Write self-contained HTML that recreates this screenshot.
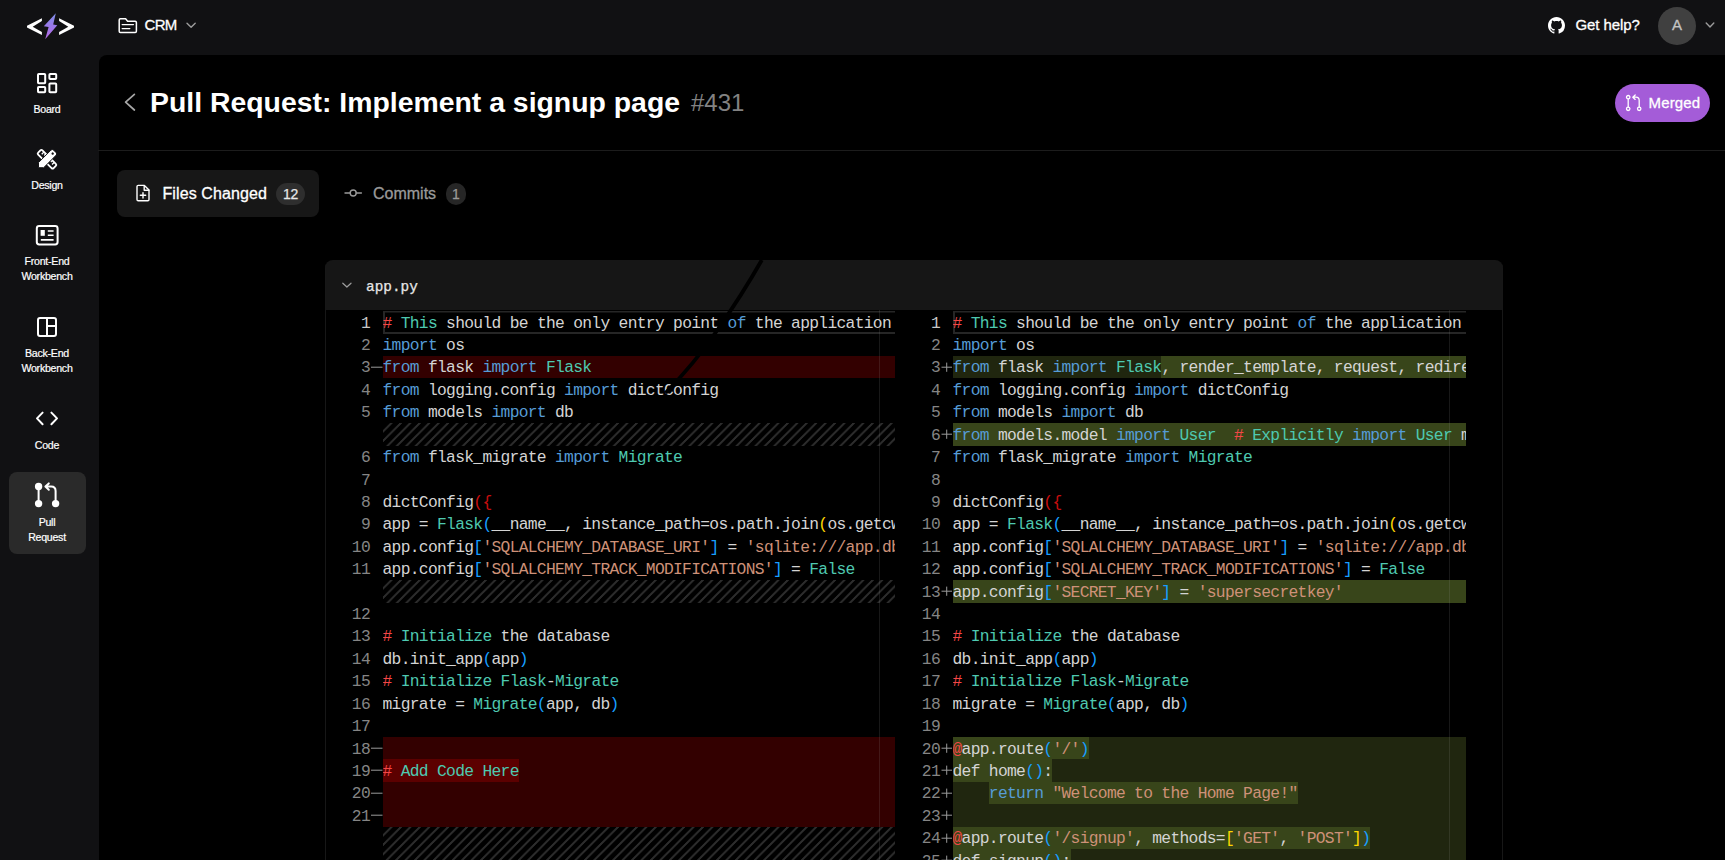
<!DOCTYPE html>
<html lang="en"><head><meta charset="utf-8"><title>Pull Request: Implement a signup page #431</title>
<style>
*{box-sizing:border-box;margin:0;padding:0}
html,body{width:1725px;height:860px;overflow:hidden;background:#111113;}
body{position:relative;font-family:"Liberation Sans",sans-serif;color:#fff;-webkit-font-smoothing:antialiased}
.abs{position:absolute}
.sb{-webkit-text-stroke:.3px currentColor}
#main{position:absolute;left:98.5px;top:55.3px;width:1627px;height:805px;background:#000;border-top-left-radius:8px}
#side .it{position:absolute;left:8.5px;width:77px;text-align:center;font-size:10.6px;line-height:15px;color:#fff;border-radius:8px;letter-spacing:-.25px;-webkit-text-stroke:.2px #fff}
#side .it svg{display:block;margin:12px auto 7px;width:24px;height:24px}
#side .it.act{background:#2a2a2a}
.hdr{position:absolute;font-size:15px;color:#fff;white-space:nowrap}
#title{position:absolute;left:150px;top:83px;font-size:28.4px;font-weight:bold;line-height:38px;white-space:nowrap}
#num{position:absolute;left:691px;top:84px;font-size:24px;line-height:38px;color:#828282;white-space:nowrap}
#sep{position:absolute;left:98px;top:150px;width:1627px;height:1px;background:#1c1c1c}
#merged{position:absolute;left:1615px;top:84px;width:95.3px;height:38px;border-radius:19px;background:#a45cd8;font-size:15px;line-height:38px;color:#fff}
#tab1{position:absolute;left:117px;top:170px;width:202px;height:47px;border-radius:8px;background:#171717}
.tabtxt{position:absolute;font-size:16px;line-height:20px;white-space:nowrap}
.badge{position:absolute;height:22px;border-radius:11px;background:#2e2e2e;font-size:14px;line-height:22.5px;-webkit-text-stroke:.25px currentColor;letter-spacing:-.3px;text-align:center;color:#e8e8e8}
#card{position:absolute;left:325px;top:260px;width:1178px;height:600px;background:#000;border-top-left-radius:8px;border-top-right-radius:8px;overflow:hidden}
#cardh{position:absolute;left:0;top:0;width:1178px;height:50px;background:#161616}
#fname{position:absolute;left:41px;top:16.5px;font-family:"Liberation Mono",monospace;font-size:14.4px;line-height:20px;color:#e6e6e6;-webkit-text-stroke:.25px #e6e6e6}
.pane{position:absolute;top:51.1px;height:560px;overflow:hidden;font-family:"Liberation Mono",monospace;font-size:16.3px;letter-spacing:-.6916px;line-height:22.4px;color:#d4d4d4;white-space:pre}
.row{position:absolute;left:0;height:22.5px;width:100%}
.ln{position:absolute;left:0;top:1.5px;width:45.5px;text-align:right;color:#858585}
.mk{position:absolute;left:46px;width:12px;height:22.4px}
.cd{position:absolute;left:58px;right:0;height:22.5px;overflow:hidden;padding-top:1.5px;z-index:0}
.k{color:#569cd6}.t{color:#4ec9b0}.s{color:#ce9178}.r{color:#f44747}.b1{color:#179fff}.b2{color:#ffd700}.br{color:rgba(255,18,18,.8)}
.del .cd{background:#330000}.del .h::before{background:#5c0000}
.ins .cd{background:#20260f}.ins .h::before{background:#38451a}
.h{position:relative}
.h::before{content:"";position:absolute;left:0;right:0;top:-2.5px;height:22.5px;z-index:-1}
.hatch .cd{background-image:linear-gradient(-45deg,#2c2c2c 12.5%,transparent 12.5%,transparent 50%,#2c2c2c 50%,#2c2c2c 62.5%,transparent 62.5%,transparent 100%);background-size:9.44px 9.44px}
.tall,.tall .cd{height:60px}
.cur .cd{box-shadow:inset 2px 0 0 0 #262626,inset 0 1.4px 0 0 #262626,inset 0 -2px 0 0 #262626}
.cur .ln{color:#c6c6c6}
.vr{position:absolute;top:50px;width:1px;height:560px;background:rgba(160,160,160,.15)}
.cb{position:absolute;top:0;width:1px;height:600px;background:#171717}
</style></head><body>
<div id="main"></div>
<!-- logo -->
<svg class="abs" style="left:20px;top:5px" width="60" height="40" viewBox="0 0 60 40">
<defs><linearGradient id="lg" x1="0" y1="0" x2="0" y2="1"><stop offset="0" stop-color="#7f8fe6"/><stop offset="0.5" stop-color="#9a78e8"/><stop offset="1" stop-color="#b86ae6"/></linearGradient></defs>
<path d="M21.9 13.3 L7 20.7 L7 22.6 L21.9 30 L21.9 27.1 L12.7 21.65 L21.9 16.1 Z" fill="#fff"/>
<path d="M39.1 13.3 L54 20.7 L54 22.6 L39.1 30 L39.1 27.1 L48.3 21.65 L39.1 16.1 Z" fill="#fff"/>
<path d="M35.8 8.2 L23.8 21.3 L28.6 21.9 L25.2 34.2 L37.3 20.2 L33.2 19.6 Z" fill="url(#lg)"/>
</svg>
<!-- project selector -->
<svg class="abs" style="left:116px;top:15px" width="24" height="20" viewBox="0 0 24 20"><path d="M3.2 5 Q3.2 3.8 4.4 3.8 L9.6 3.8 L11.6 6.2 L19.2 6.2 Q20.4 6.2 20.4 7.4 L20.4 16.2 Q20.4 17.4 19.2 17.4 L4.4 17.4 Q3.2 17.4 3.2 16.2 Z" fill="none" stroke="#fff" stroke-width="1.5" stroke-linejoin="round"/><path d="M6.2 9.6 H17.4 M6.2 13.6 H13.8" stroke="#fff" stroke-width="1.4" stroke-linecap="round" fill="none"/></svg>
<div class="hdr sb" style="left:144.5px;top:14.7px;line-height:20px;letter-spacing:-.7px">CRM</div>
<svg class="abs" style="left:185px;top:20px" width="12" height="10" viewBox="0 0 12 10"><path d="M2 3.2 L6.1 7.3 L10.2 3.2" fill="none" stroke="#9c9c9c" stroke-width="1.4" stroke-linecap="round" stroke-linejoin="round"/></svg>
<!-- right header -->
<svg class="abs" style="left:1547.6px;top:16.8px" width="17" height="17" viewBox="0 0 16 16"><path fill="#fff" d="M8 0C3.58 0 0 3.58 0 8c0 3.54 2.29 6.53 5.47 7.59.4.07.55-.17.55-.38 0-.19-.01-.82-.01-1.49-2.01.37-2.53-.49-2.69-.94-.09-.23-.48-.94-.82-1.13-.28-.15-.68-.52-.01-.53.63-.01 1.08.58 1.23.82.72 1.21 1.87.87 2.33.66.07-.52.28-.87.51-1.07-1.78-.2-3.64-.89-3.64-3.95 0-.87.31-1.59.82-2.15-.08-.2-.36-1.02.08-2.12 0 0 .67-.21 2.2.82.64-.18 1.32-.27 2-.27.68 0 1.36.09 2 .27 1.53-1.04 2.2-.82 2.2-.82.44 1.1.16 1.92.08 2.12.51.56.82 1.27.82 2.15 0 3.07-1.87 3.75-3.65 3.95.29.25.54.73.54 1.48 0 1.07-.01 1.93-.01 2.2 0 .21.15.46.55.38A8.013 8.013 0 0016 8c0-4.42-3.58-8-8-8z"/></svg>
<div class="hdr sb" style="left:1575.5px;top:14.5px;line-height:20px;letter-spacing:-.1px">Get help?</div>
<div class="abs sb" style="left:1658px;top:6.5px;width:38px;height:38px;border-radius:19px;background:#404040;color:#c4c4c4;font-size:15px;line-height:35.5px;text-align:center">A</div>
<svg class="abs" style="left:1704px;top:20px" width="12" height="10" viewBox="0 0 12 10"><path d="M2.2 3.1 L6 6.9 L9.8 3.1" fill="none" stroke="#9c9c9c" stroke-width="1.4" stroke-linecap="round" stroke-linejoin="round"/></svg>
<!-- sidebar -->
<div id="side">
<div class="it" style="top:59px;height:66px"><svg viewBox="0 0 24 24" fill="none" stroke="#fff" stroke-width="2" stroke-linejoin="round"><rect x="3" y="3" width="7.2" height="9.2" rx=".8"/><rect x="14.4" y="3" width="6.8" height="5" rx=".8"/><rect x="14.4" y="12.4" width="6.8" height="8.8" rx=".8"/><rect x="3" y="16" width="7.2" height="5.2" rx=".8"/></svg>Board</div>
<div class="it" style="top:135px;height:66px"><svg viewBox="0 0 24 24"><g transform="translate(12 12.3) scale(.91) translate(-11.4 -12.5)"><g transform="translate(-.6 .4) rotate(45 12 12)"><rect x="0" y="8.7" width="24" height="6.6" rx="1.6" fill="none" stroke="#fff" stroke-width="2"/><path d="M4 9 V12.2 M7 9 V11.2 M17 9 V11.2 M20 9 V12.2" stroke="#fff" stroke-width="1.5" fill="none"/></g><g transform="translate(-.6 .4) rotate(-45 12 12)"><path d="M-1.2 12 L2.8 8 L22.2 8 Q24.2 8 24.2 10 L24.2 14 Q24.2 16 22.2 16 L2.8 16 Z" fill="#fff" stroke="#111113" stroke-width="1"/><circle cx="20.8" cy="12" r="1.3" fill="#111113"/></g></g></svg>Design</div>
<div class="it" style="top:211px;height:82px"><svg viewBox="0 0 24 24" fill="none" stroke="#fff"><rect x="1.8" y="3" width="20.8" height="18.4" rx="2.4" stroke-width="2"/><rect x="5.6" y="7" width="4.2" height="5.8" fill="#fff" stroke="none"/><path d="M12.8 8 H18.6 M12.8 12.2 H18.6 M5.8 16.9 H18.6" stroke-width="1.6"/></svg>Front-End<br>Workbench</div>
<div class="it" style="top:303px;height:82px"><svg viewBox="0 0 24 24" fill="none" stroke="#fff" stroke-width="2"><rect x="3" y="3" width="18" height="18" rx="2"/><path d="M12 3 V21 M12 10.9 H21"/></svg>Back-End<br>Workbench</div>
<div class="it" style="top:395px;height:66px"><svg viewBox="0 0 24 24" fill="none" stroke="#fff" stroke-width="2" stroke-linecap="round" stroke-linejoin="round"><path d="M7.6 5.6 L2 11.4 L7.6 17.2 M16.4 5.6 L22 11.4 L16.4 17.2"/></svg>Code</div>
<div class="it act" style="top:472px;height:82px"><svg style="overflow:visible" viewBox="0 0 24 24" fill="none" stroke="#fff" stroke-width="2" stroke-linecap="round" stroke-linejoin="round"><g transform="translate(0 -1)"><circle cx="3.6" cy="3.5" r="2.7" fill="#fff"/><circle cx="3.6" cy="20.6" r="2.7" fill="#fff"/><circle cx="20.6" cy="20.6" r="2.7" fill="#fff"/><path d="M3.6 4 V20 M20.6 18 V8 Q20.6 3.5 16.2 3.5 H10.6 M13.8 0.4 L10.4 3.5 L13.8 6.7"/></g></svg>Pull<br>Request</div>
</div>
<!-- title row -->
<svg class="abs" style="left:122px;top:92px" width="16" height="20" viewBox="0 0 16 20"><path d="M12.4 2.4 L3.6 10.2 L12.4 18" fill="none" stroke="#a8a8a8" stroke-width="1.7" stroke-linecap="round" stroke-linejoin="round"/></svg>
<div id="title">Pull Request: Implement a signup page</div>
<div id="num">#431</div>
<div id="merged"><svg class="abs" style="left:9px;top:10px" width="20" height="18" viewBox="0 0 20 18" fill="none" stroke="#fff" stroke-width="1.3" stroke-linecap="round" stroke-linejoin="round"><circle cx="4.2" cy="3.2" r="1.7"/><circle cx="4.2" cy="14.8" r="1.7"/><circle cx="15.2" cy="14.8" r="1.7"/><path d="M4.2 5 V13 M15.2 13 V6.4 Q15.2 3.2 12 3.2 H9 M11.2 1 L8.8 3.2 L11.2 5.4"/></svg><span class="abs sb" style="left:33.5px;top:0;letter-spacing:.15px">Merged</span></div>
<div id="sep"></div>
<!-- tabs -->
<div id="tab1"></div>
<svg class="abs" style="left:134px;top:183px" width="18" height="20" viewBox="0 0 18 20" fill="none" stroke="#fff" stroke-width="1.4" stroke-linejoin="round" stroke-linecap="round"><path d="M3 3.6 Q3 2.4 4.2 2.4 H10.4 L15 7 V16.6 Q15 17.8 13.8 17.8 H4.2 Q3 17.8 3 16.6 Z"/><path d="M10.2 2.6 V7.2 H14.8"/><path d="M9 9.6 V15 M6.3 12.3 H11.7"/></svg>
<div class="tabtxt sb" style="left:162.5px;top:183.7px;color:#fff;letter-spacing:.1px">Files Changed</div>
<div class="badge" style="left:276.3px;top:182.5px;width:28.5px">12</div>
<svg class="abs" style="left:343px;top:184px" width="20" height="18" viewBox="0 0 20 18" fill="none" stroke="#9a9a9a" stroke-width="1.4" stroke-linecap="round"><circle cx="10.2" cy="9" r="3"/><path d="M2 9 H7.2 M13.2 9 H18.4"/></svg>
<div class="tabtxt sb" style="left:373px;top:183.7px;color:#9a9a9a;letter-spacing:0">Commits</div>
<div class="badge" style="left:445.8px;top:182.5px;width:20px;color:#9a9a9a;background:#262626">1</div>

<div id="card"><div id="cardh"></div><div class="cb" style="left:0"></div><div class="cb" style="left:1177px"></div>
<svg class="abs" style="left:16px;top:21px" width="12" height="8" viewBox="0 0 12 8"><path d="M1.8 2.2 L5.9 6 L10 2.2" fill="none" stroke="#9c9c9c" stroke-width="1.25" stroke-linecap="round" stroke-linejoin="round"/></svg>
<div id="fname">app.py</div>
<div class="pane" style="left:-0.5px;width:570.5px">
<div class="row cur" style="top:0.0px"><span class="ln">1</span><div class="cd"><span class="r">#</span> <span class="t">This</span> should be the only entry point <span class="k">of</span> the application</div></div>
<div class="row " style="top:22.42px"><span class="ln">2</span><div class="cd"><span class="k">import</span> os</div></div>
<div class="row del" style="top:44.84px"><span class="ln">3</span><svg class="mk" viewBox="0 0 12 22.4"><rect x="0" y="10.7" width="11.5" height="1" fill="#9a9a9a"/></svg><div class="cd"><span class="k">from</span> flask <span class="k">import</span> <span class="t">Flask</span></div></div>
<div class="row " style="top:67.26px"><span class="ln">4</span><div class="cd"><span class="k">from</span> logging.config <span class="k">import</span> dictConfig</div></div>
<div class="row " style="top:89.68px"><span class="ln">5</span><div class="cd"><span class="k">from</span> models <span class="k">import</span> db</div></div>
<div class="row hatch" style="top:112.1px"><span class="ln"></span><div class="cd"></div></div>
<div class="row " style="top:134.52px"><span class="ln">6</span><div class="cd"><span class="k">from</span> flask_migrate <span class="k">import</span> <span class="t">Migrate</span></div></div>
<div class="row " style="top:156.94px"><span class="ln">7</span><div class="cd"></div></div>
<div class="row " style="top:179.36px"><span class="ln">8</span><div class="cd">dictConfig<span class="br">({</span></div></div>
<div class="row " style="top:201.78px"><span class="ln">9</span><div class="cd">app = <span class="t">Flask</span><span class="b1">(</span>__name__, instance_path=os.path.join<span class="b2">(</span>os.getcwd</div></div>
<div class="row " style="top:224.2px"><span class="ln">10</span><div class="cd">app.config<span class="b1">[</span><span class="s">'SQLALCHEMY_DATABASE_URI'</span><span class="b1">]</span> = <span class="s">'sqlite:///app.db'</span></div></div>
<div class="row " style="top:246.62px"><span class="ln">11</span><div class="cd">app.config<span class="b1">[</span><span class="s">'SQLALCHEMY_TRACK_MODIFICATIONS'</span><span class="b1">]</span> = <span class="t">False</span></div></div>
<div class="row hatch" style="top:269.04px"><span class="ln"></span><div class="cd"></div></div>
<div class="row " style="top:291.46px"><span class="ln">12</span><div class="cd"></div></div>
<div class="row " style="top:313.88px"><span class="ln">13</span><div class="cd"><span class="r">#</span> <span class="t">Initialize</span> the database</div></div>
<div class="row " style="top:336.3px"><span class="ln">14</span><div class="cd">db.init_app<span class="b1">(</span>app<span class="b1">)</span></div></div>
<div class="row " style="top:358.72px"><span class="ln">15</span><div class="cd"><span class="r">#</span> <span class="t">Initialize</span> <span class="t">Flask</span>-<span class="t">Migrate</span></div></div>
<div class="row " style="top:381.14px"><span class="ln">16</span><div class="cd">migrate = <span class="t">Migrate</span><span class="b1">(</span>app, db<span class="b1">)</span></div></div>
<div class="row " style="top:403.56px"><span class="ln">17</span><div class="cd"></div></div>
<div class="row del" style="top:425.98px"><span class="ln">18</span><svg class="mk" viewBox="0 0 12 22.4"><rect x="0" y="10.7" width="11.5" height="1" fill="#9a9a9a"/></svg><div class="cd"></div></div>
<div class="row del" style="top:448.4px"><span class="ln">19</span><svg class="mk" viewBox="0 0 12 22.4"><rect x="0" y="10.7" width="11.5" height="1" fill="#9a9a9a"/></svg><div class="cd"><span class="h"><span class="r">#</span> <span class="t">Add</span> <span class="t">Code</span> <span class="t">Here</span></span></div></div>
<div class="row del" style="top:470.82px"><span class="ln">20</span><svg class="mk" viewBox="0 0 12 22.4"><rect x="0" y="10.7" width="11.5" height="1" fill="#9a9a9a"/></svg><div class="cd"></div></div>
<div class="row del" style="top:493.24px"><span class="ln">21</span><svg class="mk" viewBox="0 0 12 22.4"><rect x="0" y="10.7" width="11.5" height="1" fill="#9a9a9a"/></svg><div class="cd"></div></div>
<div class="row hatch tall" style="top:515.66px"><span class="ln"></span><div class="cd"></div></div>
</div>
<div class="pane" style="left:569.5px;width:571.5px">
<div class="row cur" style="top:0.0px"><span class="ln">1</span><div class="cd"><span class="r">#</span> <span class="t">This</span> should be the only entry point <span class="k">of</span> the application</div></div>
<div class="row " style="top:22.42px"><span class="ln">2</span><div class="cd"><span class="k">import</span> os</div></div>
<div class="row ins" style="top:44.84px"><span class="ln">3</span><svg class="mk" viewBox="0 0 12 22.4"><rect x="0.5" y="10.7" width="10.5" height="1" fill="#9a9a9a"/><rect x="5.2" y="6.6" width="1" height="9.2" fill="#9a9a9a"/></svg><div class="cd"><span class="k">from</span> flask <span class="k">import</span> <span class="t">Flask</span><span class="h">, render_template, request, redirect, url_for, flash</span></div></div>
<div class="row " style="top:67.26px"><span class="ln">4</span><div class="cd"><span class="k">from</span> logging.config <span class="k">import</span> dictConfig</div></div>
<div class="row " style="top:89.68px"><span class="ln">5</span><div class="cd"><span class="k">from</span> models <span class="k">import</span> db</div></div>
<div class="row ins" style="top:112.1px"><span class="ln">6</span><svg class="mk" viewBox="0 0 12 22.4"><rect x="0.5" y="10.7" width="10.5" height="1" fill="#9a9a9a"/><rect x="5.2" y="6.6" width="1" height="9.2" fill="#9a9a9a"/></svg><div class="cd"><span class="h"><span class="k">from</span> models.model <span class="k">import</span> <span class="t">User</span>  <span class="r">#</span> <span class="t">Explicitly</span> <span class="k">import</span> <span class="t">User</span> model</span></div></div>
<div class="row " style="top:134.52px"><span class="ln">7</span><div class="cd"><span class="k">from</span> flask_migrate <span class="k">import</span> <span class="t">Migrate</span></div></div>
<div class="row " style="top:156.94px"><span class="ln">8</span><div class="cd"></div></div>
<div class="row " style="top:179.36px"><span class="ln">9</span><div class="cd">dictConfig<span class="br">({</span></div></div>
<div class="row " style="top:201.78px"><span class="ln">10</span><div class="cd">app = <span class="t">Flask</span><span class="b1">(</span>__name__, instance_path=os.path.join<span class="b2">(</span>os.getcwd</div></div>
<div class="row " style="top:224.2px"><span class="ln">11</span><div class="cd">app.config<span class="b1">[</span><span class="s">'SQLALCHEMY_DATABASE_URI'</span><span class="b1">]</span> = <span class="s">'sqlite:///app.db'</span></div></div>
<div class="row " style="top:246.62px"><span class="ln">12</span><div class="cd">app.config<span class="b1">[</span><span class="s">'SQLALCHEMY_TRACK_MODIFICATIONS'</span><span class="b1">]</span> = <span class="t">False</span></div></div>
<div class="row ins" style="top:269.04px"><span class="ln">13</span><svg class="mk" viewBox="0 0 12 22.4"><rect x="0.5" y="10.7" width="10.5" height="1" fill="#9a9a9a"/><rect x="5.2" y="6.6" width="1" height="9.2" fill="#9a9a9a"/></svg><div class="cd"><span class="h">app.config<span class="b1">[</span><span class="s">'SECRET_KEY'</span><span class="b1">]</span> = <span class="s">'supersecretkey'</span>                                        </span></div></div>
<div class="row " style="top:291.46px"><span class="ln">14</span><div class="cd"></div></div>
<div class="row " style="top:313.88px"><span class="ln">15</span><div class="cd"><span class="r">#</span> <span class="t">Initialize</span> the database</div></div>
<div class="row " style="top:336.3px"><span class="ln">16</span><div class="cd">db.init_app<span class="b1">(</span>app<span class="b1">)</span></div></div>
<div class="row " style="top:358.72px"><span class="ln">17</span><div class="cd"><span class="r">#</span> <span class="t">Initialize</span> <span class="t">Flask</span>-<span class="t">Migrate</span></div></div>
<div class="row " style="top:381.14px"><span class="ln">18</span><div class="cd">migrate = <span class="t">Migrate</span><span class="b1">(</span>app, db<span class="b1">)</span></div></div>
<div class="row " style="top:403.56px"><span class="ln">19</span><div class="cd"></div></div>
<div class="row ins" style="top:425.98px"><span class="ln">20</span><svg class="mk" viewBox="0 0 12 22.4"><rect x="0.5" y="10.7" width="10.5" height="1" fill="#9a9a9a"/><rect x="5.2" y="6.6" width="1" height="9.2" fill="#9a9a9a"/></svg><div class="cd"><span class="h"><span class="r">@</span>app.route<span class="b1">(</span><span class="s">'/'</span><span class="b1">)</span></span></div></div>
<div class="row ins" style="top:448.4px"><span class="ln">21</span><svg class="mk" viewBox="0 0 12 22.4"><rect x="0.5" y="10.7" width="10.5" height="1" fill="#9a9a9a"/><rect x="5.2" y="6.6" width="1" height="9.2" fill="#9a9a9a"/></svg><div class="cd"><span class="h">def home<span class="b1">()</span>:</span></div></div>
<div class="row ins" style="top:470.82px"><span class="ln">22</span><svg class="mk" viewBox="0 0 12 22.4"><rect x="0.5" y="10.7" width="10.5" height="1" fill="#9a9a9a"/><rect x="5.2" y="6.6" width="1" height="9.2" fill="#9a9a9a"/></svg><div class="cd">    <span class="h"><span class="k">return</span> <span class="s">"Welcome to the Home Page!"</span></span></div></div>
<div class="row ins" style="top:493.24px"><span class="ln">23</span><svg class="mk" viewBox="0 0 12 22.4"><rect x="0.5" y="10.7" width="10.5" height="1" fill="#9a9a9a"/><rect x="5.2" y="6.6" width="1" height="9.2" fill="#9a9a9a"/></svg><div class="cd"></div></div>
<div class="row ins" style="top:515.66px"><span class="ln">24</span><svg class="mk" viewBox="0 0 12 22.4"><rect x="0.5" y="10.7" width="10.5" height="1" fill="#9a9a9a"/><rect x="5.2" y="6.6" width="1" height="9.2" fill="#9a9a9a"/></svg><div class="cd"><span class="h"><span class="r">@</span>app.route<span class="b1">(</span><span class="s">'/signup'</span>, methods=<span class="b2">[</span><span class="s">'GET'</span>, <span class="s">'POST'</span><span class="b2">]</span><span class="b1">)</span></span></div></div>
<div class="row ins" style="top:538.08px"><span class="ln">25</span><svg class="mk" viewBox="0 0 12 22.4"><rect x="0.5" y="10.7" width="10.5" height="1" fill="#9a9a9a"/><rect x="5.2" y="6.6" width="1" height="9.2" fill="#9a9a9a"/></svg><div class="cd"><span class="h">def signup<span class="b1">()</span>:</span></div></div>
</div>
<div class="vr" style="left:554px"></div><div class="vr" style="left:1124px"></div>
<svg class="abs" style="left:330px;top:0" width="120" height="140" viewBox="0 0 120 140"><path d="M106.8 0 Q87.6 34 61 72 Q39 104 10.5 133" fill="none" stroke="#000" stroke-width="3.9"/></svg>

</div>
</body></html>
